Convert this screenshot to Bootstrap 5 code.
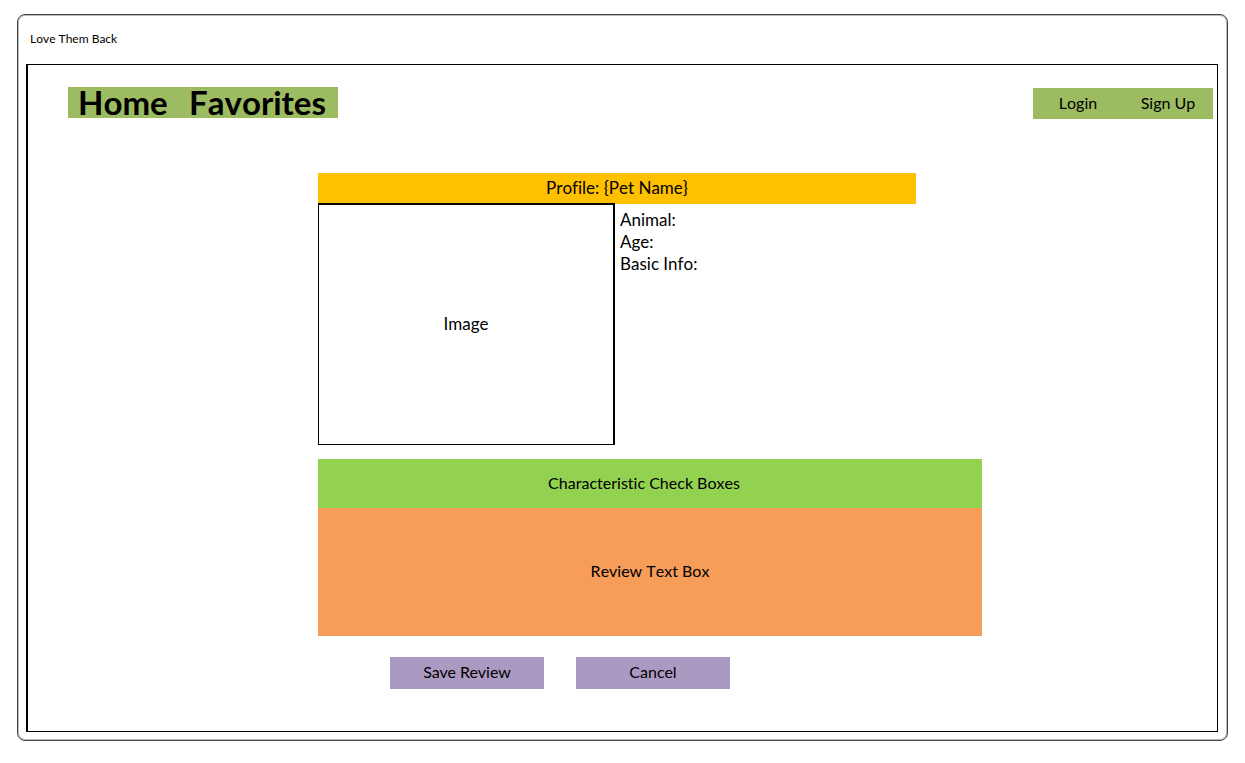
<!DOCTYPE html>
<html lang="en">
<head>
<meta charset="utf-8">
<meta name="viewport" content="width=device-width, initial-scale=1">
<title>Love Them Back</title>
<link href="https://cdn.jsdelivr.net/npm/bootstrap@5.3.0/dist/css/bootstrap.min.css" rel="stylesheet">
<style>
  body { font-family: Lato, "Liberation Sans", sans-serif; font-size: 16px; line-height: 22px; font-kerning: none; font-variant-ligatures: none; color: #000; background: #fff; padding: 14px 17px 22px; }
  .window-frame { border: 1px solid #444; border-radius: 8px; box-shadow: inset 0 0 0 1px #bbb; padding: 1px 9px 8px 8px; }
  .window-title { font-size: 12px; line-height: 16px; padding: 15px 4px 17px; }
  .page-frame { border: 1px solid #000; border-left-width: 2px; }
  .site-nav { padding: 22px 4px 0 40px; }
  .nav-group { background: #9dbb61; height: 31px; padding-bottom: 2px; }
  .nav-group a { color: #000; text-decoration: none; }
  .nav-main { width: 270px; padding-left: 10px; padding-right: 12px; font-size: 33px; font-weight: 700; }
  .nav-account { width: 180px; margin-top: 1px; }
  .nav-account a { flex: 1 1 0; text-align: center; }
  .pet-page { width: 100%; max-width: 954px; padding-left: 290px; margin-top: 54px; }
  .profile { max-width: 598px; font-size: 17px; }
  .profile-title { background: #ffc000; height: 31px; padding-bottom: 2px; font-size: 17px; line-height: 22px; font-weight: 400; }
  .pet-image { flex: 0 0 297px; height: 242px; padding-bottom: 2px; margin-top: -1px; border: 1px solid #000; border-width: 2px 2px 1px 1px; }
  .pet-facts { padding: 5px; }
  .traits { background: #92d250; height: 49px; padding: 0 12px 2px 0; margin-top: 14px; }
  .review-box { background: #f59d59; height: 128px; padding: 52px 12px; border: 0; border-radius: 0; text-align: center; resize: none; color: #000; overflow: hidden; font-kerning: inherit; }
  .actions { gap: 32px; padding: 21px 0 42px 72px; }
  .actions button { width: 154px; height: 32px; padding: 0 0 2px; border: 0; background: #aa99c0; color: #000; }
  @media (max-width: 991px) {
    .pet-page { padding: 0 16px; margin-right: auto; margin-left: auto; }
    .actions { padding-left: 0; }
  }
</style>
</head>
<body class="min-vh-100 d-flex flex-column">
<div class="window-frame flex-grow-1 d-flex flex-column">
  <header class="window-title">Love Them Back</header>
  <div class="page-frame flex-grow-1">
    <nav class="site-nav d-flex flex-wrap justify-content-between align-items-start">
      <div class="nav-group nav-main d-flex align-items-center justify-content-between">
        <a href="#">Home</a>
        <a href="#">Favorites</a>
      </div>
      <div class="nav-group nav-account d-flex align-items-center">
        <a href="#">Login</a>
        <a href="#">Sign Up</a>
      </div>
    </nav>
    <main class="pet-page">
      <section class="profile">
        <h1 class="profile-title d-flex align-items-center justify-content-center m-0">Profile: {Pet Name}</h1>
        <div class="d-flex">
          <div class="pet-image d-flex align-items-center justify-content-center">Image</div>
          <div class="pet-facts">
            <div>Animal:</div>
            <div>Age:</div>
            <div>Basic Info:</div>
          </div>
        </div>
      </section>
      <form>
        <div class="traits d-flex align-items-center justify-content-center">Characteristic Check Boxes</div>
        <textarea class="review-box d-block w-100" aria-label="Review">Review Text Box</textarea>
        <div class="actions d-flex flex-wrap">
          <button type="submit">Save Review</button>
          <button type="button">Cancel</button>
        </div>
      </form>
    </main>
  </div>
</div>
<script src="https://cdn.jsdelivr.net/npm/bootstrap@5.3.0/dist/js/bootstrap.bundle.min.js"></script>
</body>
</html>
